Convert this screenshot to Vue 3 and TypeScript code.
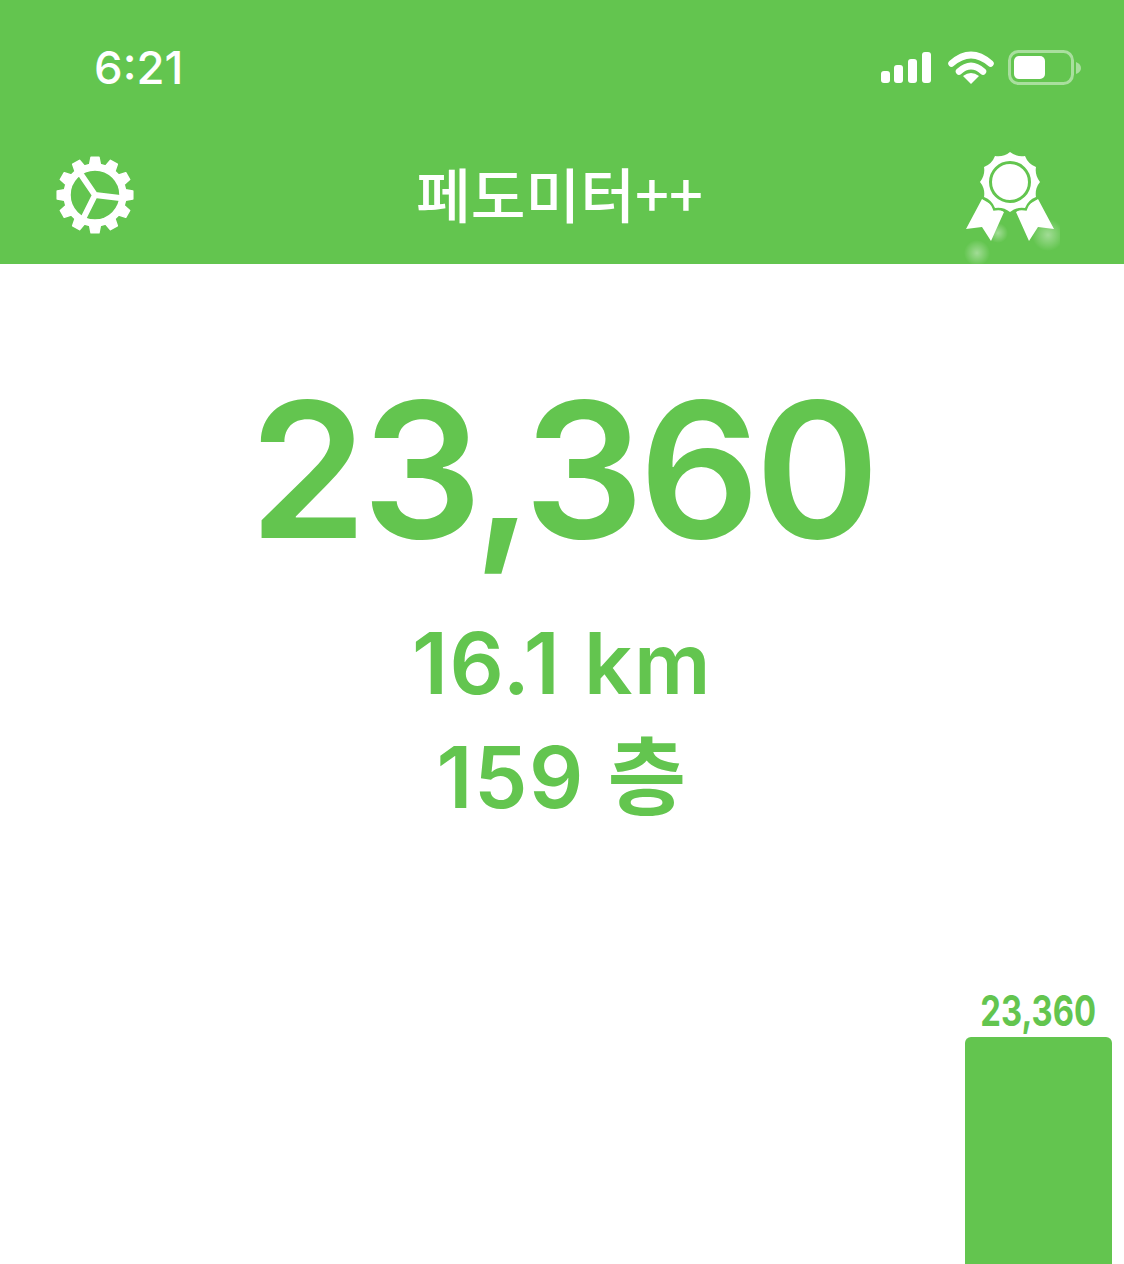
<template>
  <div class="screen">
    <header class="top">
      <div class="status">
        <span class="time">6:21</span>
        <div class="status-icons">
          <svg class="signal" width="52" height="34" viewBox="0 0 52 34">
            <rect x="1" y="20" width="9" height="12" rx="3" />
            <rect x="14" y="14" width="9" height="18" rx="3" />
            <rect x="28" y="8" width="9" height="24" rx="3" />
            <rect x="42" y="1" width="9" height="31" rx="3" />
          </svg>
          <svg class="wifi" width="46" height="34" viewBox="0 0 46 34">
            <path d="M3.5 12.5 Q23 -4.5 42.5 12.5" />
            <path d="M11 20.5 Q23 9.5 35 20.5" />
            <path class="wifi-dot" d="M23 33 L15 25 Q23 19 31 25 Z" />
          </svg>
          <svg class="battery" width="74" height="36" viewBox="0 0 74 36">
            <rect class="battery-case" x="1.5" y="1.5" width="63" height="32" rx="9" />
            <rect class="battery-level" x="6" y="6" width="31" height="23" rx="5" />
            <path class="battery-cap" d="M68 12 Q73 14 73 18 Q73 22 68 24 Z" />
          </svg>
        </div>
      </div>
      <nav class="nav">
        <svg class="gear" width="80" height="80" viewBox="-40 -40 80 80">
          <path :d="gearPath" fill-rule="evenodd" stroke="#fff" stroke-width="1.5" stroke-linejoin="round" />
          <path class="spokes" d="M0 0 L-13 -19 M0 0 L25 3 M0 0 L-11 22" />
        </svg>
        <h1 class="title">페도미터++</h1>
        <svg class="award" width="110" height="134" viewBox="0 0 110 134">
          <defs>
            <radialGradient id="spark">
              <stop offset="0" stop-color="#fff" stop-opacity="0.4" />
              <stop offset="1" stop-color="#fff" stop-opacity="0" />
            </radialGradient>
          </defs>
          <polygon points="32,69 54,82 41,111 32,97 16,99" />
          <polygon points="66,82 88,69 104,99 88,97 79,111" />
          <path :d="badgePath" class="badge-gap" />
          <path :d="badgePath" />
          <circle class="badge-ring" cx="60" cy="52" r="19.5" />
          <circle cx="27" cy="123" r="13" fill="url(#spark)" />
          <circle cx="48" cy="103" r="10" fill="url(#spark)" />
          <circle cx="98" cy="105" r="16" fill="url(#spark)" />
        </svg>
      </nav>
    </header>

    <main class="stats">
      <div class="steps">23,360</div>
      <div class="detail">16.1 km</div>
      <div class="detail floors">159 층</div>
    </main>

    <section class="chart">
      <div class="column" v-for="day in days" :key="day.label">
        <span class="bar-label">{{ day.label }}</span>
        <div class="bar" />
      </div>
    </section>
  </div>
</template>

<script setup lang="ts">
import { computed } from 'vue'

const days = [{ label: '23,360' }]

function polar(r: number, deg: number) {
  const a = (deg * Math.PI) / 180
  return `${(r * Math.sin(a)).toFixed(2)} ${(-r * Math.cos(a)).toFixed(2)}`
}

const gearPath = computed(() => {
  let d = ''
  for (let i = 0; i < 12; i++) {
    const c = i * 30
    d += `${i ? 'L' : 'M'}${polar(31, c - 10)} L${polar(38, c - 6)} L${polar(38, c + 6)} L${polar(31, c + 10)} `
  }
  d += 'Z M25 0 A25 25 0 1 0 -25 0 A25 25 0 1 0 25 0 Z'
  return d
})

const badgePath = computed(() => {
  const pt = (r: number, deg: number) => {
    const a = (deg * Math.PI) / 180
    return `${(60 + r * Math.sin(a)).toFixed(2)} ${(52 - r * Math.cos(a)).toFixed(2)}`
  }
  let d = `M${pt(30, 0)} `
  for (let i = 0; i < 12; i++) {
    d += `Q${pt(25.5, i * 30 + 15)} ${pt(30, i * 30 + 30)} `
  }
  return d + 'Z'
})
</script>

<style>
html, body {
  margin: 0;
  background: #fff;
}
</style>

<style scoped>
.screen {
  width: 1124px;
  height: 1264px;
  display: flex;
  flex-direction: column;
  overflow: hidden;
  background: #fff;
  color: #63c54f;
  font-family: Inter, "Noto Sans CJK KR", sans-serif;
}
.top {
  height: 264px;
  flex: none;
  background: #63c54f;
  color: #fff;
}
.status {
  height: 136px;
  display: flex;
  align-items: center;
  justify-content: space-between;
  padding: 0 42px 0 94px;
}
.time {
  font: 500 45.5px/1 Inter, sans-serif;
}
.status-icons {
  display: flex;
  align-items: center;
  gap: 14px;
}
.signal {
  margin-right: 2px;
}
.signal rect { fill: #fff; }
.wifi path {
  fill: none;
  stroke: #fff;
  stroke-width: 6.5;
  stroke-linecap: round;
}
.wifi .wifi-dot {
  fill: #fff;
  stroke: none;
}
.battery-case {
  fill: none;
  stroke: rgba(255, 255, 255, 0.45);
  stroke-width: 3;
}
.battery-level { fill: #fff; }
.battery-cap { fill: rgba(255, 255, 255, 0.45); }
.nav {
  height: 118px;
  display: grid;
  grid-template-columns: 1fr auto 1fr;
  grid-template-rows: 100%;
  align-items: center;
  padding: 0 64px 0 55px;
}
.gear { fill: #fff; }
.spokes {
  fill: none;
  stroke: #fff;
  stroke-width: 6;
  stroke-linecap: round;
}
.title {
  margin: 0 0 4px 4px;
  font: 500 59.5px/1 "Noto Sans CJK KR", sans-serif;
}
.award {
  fill: #fff;
  justify-self: end;
  margin-top: 4px;
}
.badge-gap {
  fill: #63c54f;
  stroke: #63c54f;
  stroke-width: 5;
}
.badge-ring {
  fill: #fff;
  stroke: #63c54f;
  stroke-width: 3;
}
.stats {
  display: flex;
  flex-direction: column;
  align-items: center;
  padding-top: 108px;
}
.steps {
  font-size: 189px;
  line-height: 196px;
  font-weight: 600;
  letter-spacing: -5px;
}
.detail {
  font-size: 85px;
  line-height: 112px;
  font-weight: 600;
  letter-spacing: 1.5px;
  margin-top: 40px;
}
.floors { margin-top: 2px; }
.chart {
  flex: 1;
  display: flex;
  justify-content: flex-end;
  align-items: flex-end;
  padding-right: 12px;
  min-height: 0;
}
.column {
  width: 147px;
  display: flex;
  flex-direction: column;
  align-items: center;
}
.bar-label {
  font-size: 42px;
  line-height: 50px;
  font-weight: 700;
  transform: scaleX(0.78);
}
.bar {
  width: 100%;
  height: 227px;
  margin-top: 1px;
  background: #63c54f;
  border-radius: 6px 6px 0 0;
}
</style>
